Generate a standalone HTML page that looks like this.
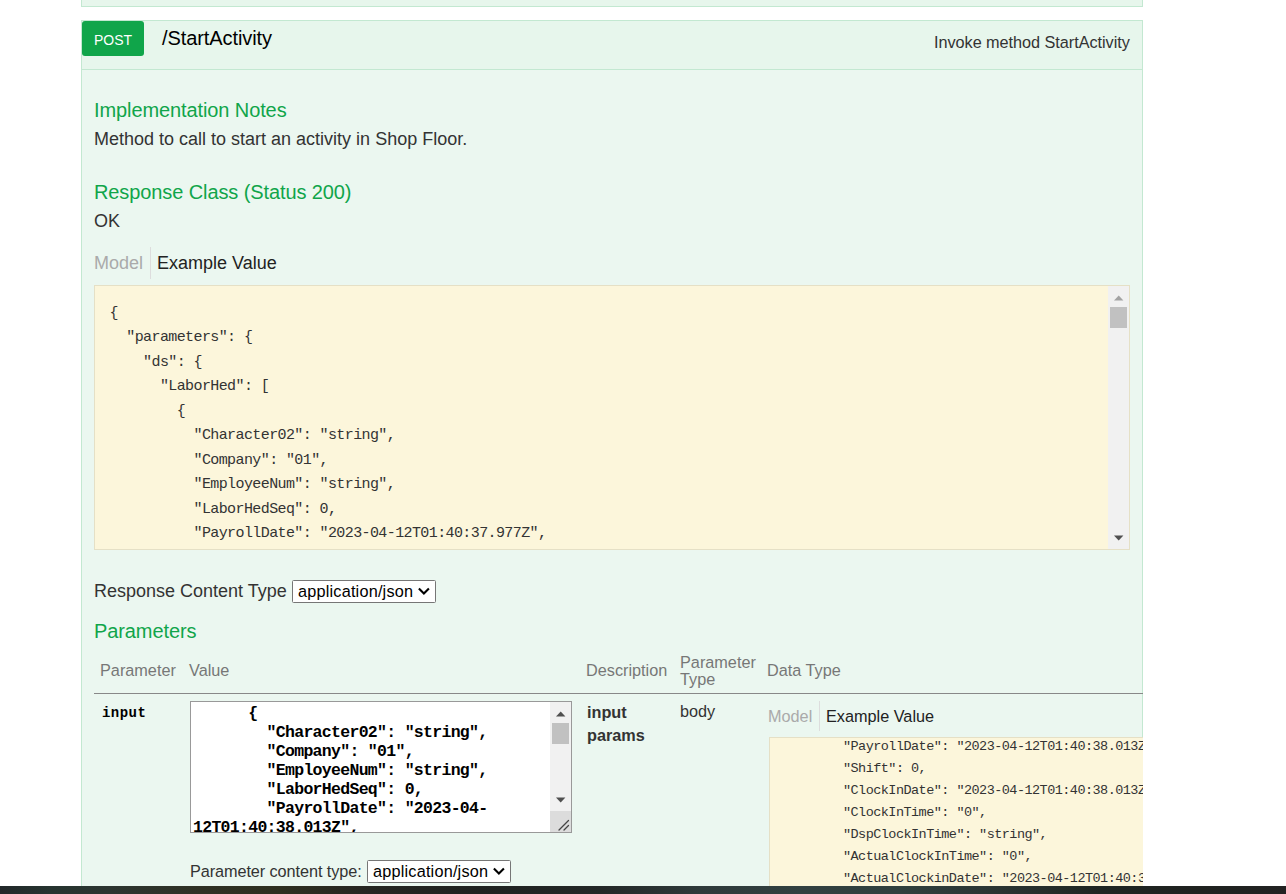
<!DOCTYPE html>
<html><head><meta charset="utf-8">
<style>
html,body{margin:0;padding:0;background:#fff;width:1286px;height:894px;overflow:hidden;position:relative}
body{font-family:"Liberation Sans",sans-serif;color:#333}
.a{position:absolute;white-space:pre}
.clip{position:absolute;left:0;top:0;width:1143px;height:886px;overflow:hidden}
.mono{font-family:"Liberation Mono",monospace}
.sb{position:absolute;background:#f1f1f1}
.thumb{position:absolute;background:#c1c1c1}
.sel{position:absolute;box-sizing:border-box;border:1px solid #767676;border-radius:1.5px;background:#fff;height:23px;width:144px}
</style></head><body>
<div class="clip">
<!-- previous operation box -->
<div class="a" style="left:81px;top:-10px;width:1060px;height:15px;background:#e7f6ec;border:1px solid #c3e8d1"></div>

<!-- heading -->
<div class="a" style="left:81px;top:20px;width:1060px;height:48px;background:#e7f6ec;border:1px solid #c3e8d1"></div>
<div class="a" style="left:82px;top:21px;width:62px;height:35px;background:#10a54a;border-radius:3px"></div>
<div class="a" style="left:94px;top:33px;font-size:14px;line-height:14px;color:#fff">POST</div>
<div class="a" style="left:162px;top:28px;font-size:20px;line-height:20px;letter-spacing:-0.09px;color:#000">/StartActivity</div>
<div class="a" style="left:934px;top:34px;font-size:16.25px;line-height:16px;letter-spacing:-0.04px;color:#333">Invoke method StartActivity</div>

<!-- content -->
<div class="a" style="left:81px;top:70px;width:1060px;height:900px;background:#ebf7f0;border:1px solid #c3e8d1;border-top:0"></div>

<div class="a" style="left:94px;top:100px;font-size:20px;line-height:20px;letter-spacing:-0.1px;color:#10a54a">Implementation Notes</div>
<div class="a" style="left:94px;top:130px;font-size:18px;line-height:18px;color:#333">Method to call to start an activity in Shop Floor.</div>
<div class="a" style="left:94px;top:182px;font-size:20px;line-height:20px;letter-spacing:-0.1px;color:#10a54a">Response Class (Status 200)</div>
<div class="a" style="left:94px;top:212px;font-size:18px;line-height:18px;color:#333">OK</div>

<div class="a" style="left:94px;top:254px;font-size:18px;line-height:18px;color:#aaa">Model</div>
<div class="a" style="left:150px;top:247px;width:1px;height:32px;background:#ddd"></div>
<div class="a" style="left:157px;top:254px;font-size:18px;line-height:18px;color:#222">Example Value</div>

<!-- code box -->
<div class="a" style="left:94px;top:285px;width:1034px;height:263px;background:#fcf6db;border:1px solid #e5e0c6;overflow:hidden">
<div class="a mono" style="left:14.5px;top:16px;font-size:15px;line-height:24.44px;letter-spacing:-0.6px;color:#333">{
  "parameters": {
    "ds": {
      "LaborHed": [
        {
          "Character02": "string",
          "Company": "01",
          "EmployeeNum": "string",
          "LaborHedSeq": 0,
          "PayrollDate": "2023-04-12T01:40:37.977Z",
          "Shift": 0,</div>
<div class="sb" style="left:1013px;top:0;width:21px;height:263px"></div>
<div class="thumb" style="left:1015px;top:21px;width:17px;height:21px"></div>
<svg class="a" style="left:1019px;top:8.5px" width="10" height="6"><path d="M0 5.5 L4.7 0.5 L9.4 5.5Z" fill="#a3a3a3"/></svg>
<svg class="a" style="left:1019px;top:249px" width="10" height="6"><path d="M0 0.5 L4.7 5.5 L9.4 0.5Z" fill="#505050"/></svg>
</div>

<div class="a" style="left:94px;top:582px;font-size:18px;line-height:18px;color:#333">Response Content Type</div>
<div class="sel" style="left:292px;top:580px"></div>
<div class="a" style="left:298px;top:582px;font-size:16.25px;line-height:18px;letter-spacing:0.2px;color:#000">application/json</div>
<svg class="a" style="left:418px;top:587px" width="13" height="9"><path d="M0.9 1.4 L5.9 6.4 L10.9 1.4" fill="none" stroke="#000" stroke-width="2.1"/></svg>

<div class="a" style="left:94px;top:621px;font-size:20px;line-height:20px;letter-spacing:-0.1px;color:#10a54a">Parameters</div>

<!-- table header -->
<div class="a" style="left:100px;top:662px;font-size:16.25px;line-height:16px;color:#777">Parameter</div>
<div class="a" style="left:189px;top:662px;font-size:16.25px;line-height:16px;color:#777">Value</div>
<div class="a" style="left:586px;top:662px;font-size:16.25px;line-height:16px;color:#777">Description</div>
<div class="a" style="left:680px;top:653.5px;font-size:16.25px;line-height:17px;color:#777">Parameter
Type</div>
<div class="a" style="left:767px;top:662px;font-size:16.25px;line-height:16px;color:#777">Data Type</div>
<div class="a" style="left:94px;top:693px;width:1049px;height:1px;background:#888"></div>

<!-- row -->
<div class="a mono" style="left:102px;top:706px;font-size:14px;line-height:15px;font-weight:bold;letter-spacing:0.45px;color:#000">input</div>

<div class="a" style="left:190px;top:701px;width:380px;height:130px;border:1px solid #999;background:#fff;overflow:hidden">
<div class="a mono" style="left:2px;top:2px;font-size:16.5px;line-height:19px;font-weight:bold;letter-spacing:-0.7px;color:#000">      {
        "Character02": "string",
        "Company": "01",
        "EmployeeNum": "string",
        "LaborHedSeq": 0,
        "PayrollDate": "2023-04-
12T01:40:38.013Z",</div>
<div class="sb" style="left:359px;top:0;width:21px;height:130px"></div>
<div class="thumb" style="left:361px;top:21px;width:17px;height:21px"></div>
<div class="a" style="left:359px;top:109px;width:21px;height:21px;background:#dcdcdc"></div>
<svg class="a" style="left:365px;top:9px" width="10" height="6"><path d="M0 5.5 L4.7 0.5 L9.4 5.5Z" fill="#505050"/></svg>
<svg class="a" style="left:365px;top:95px" width="10" height="6"><path d="M0 0.5 L4.7 5.5 L9.4 0.5Z" fill="#505050"/></svg>
<svg class="a" style="left:367px;top:117px" width="12" height="12"><path d="M1 11 L10.5 1.5 M6 11 L10.5 6.5" stroke="#444" stroke-width="1.3" stroke-linecap="round"/></svg>
</div>

<div class="a" style="left:587px;top:701px;font-size:16.25px;line-height:22.6px;font-weight:bold;color:#333">input
params</div>
<div class="a" style="left:680px;top:703px;font-size:16.25px;line-height:16px;color:#333">body</div>

<div class="a" style="left:768px;top:708px;font-size:16.25px;line-height:16px;color:#aaa">Model</div>
<div class="a" style="left:819px;top:701px;width:1px;height:30px;background:#ddd"></div>
<div class="a" style="left:826px;top:708px;font-size:16.25px;line-height:16px;color:#222">Example Value</div>

<div class="a" style="left:769px;top:737px;width:600px;height:300px;background:#fcf6db;border:1px solid #e5e0c6;overflow:hidden">
<div class="a mono" style="left:73px;top:-2.5px;font-size:13.5px;line-height:22.1px;letter-spacing:-0.54px;color:#333">"PayrollDate": "2023-04-12T01:40:38.013Z",
"Shift": 0,
"ClockInDate": "2023-04-12T01:40:38.013Z",
"ClockInTime": "0",
"DspClockInTime": "string",
"ActualClockInTime": "0",
"ActualClockinDate": "2023-04-12T01:40:38.013Z",</div>
</div>

<div class="a" style="left:190px;top:863px;font-size:16.25px;line-height:16px;letter-spacing:-0.08px;color:#333">Parameter content type:</div>
<div class="sel" style="left:367px;top:860px"></div>
<div class="a" style="left:373px;top:862px;font-size:16.25px;line-height:18px;letter-spacing:0.2px;color:#000">application/json</div>
<svg class="a" style="left:493px;top:867px" width="13" height="9"><path d="M0.9 1.4 L5.9 6.4 L10.9 1.4" fill="none" stroke="#000" stroke-width="2.1"/></svg>
</div>

<!-- bottom strip -->
<div class="a" style="left:0;top:886px;width:1286px;height:8px;background:linear-gradient(90deg,#22282a 0px,#263430 50px,#2c3530 110px,#2f3124 200px,#2e3020 280px,#262622 370px,#1f2220 480px,#232827 600px,#2e3a3a 700px,#314040 800px,#30403e 900px,#2a3432 1000px,#1f2622 1100px,#1f2220 1200px,#222 1286px)"></div>
</body></html>
